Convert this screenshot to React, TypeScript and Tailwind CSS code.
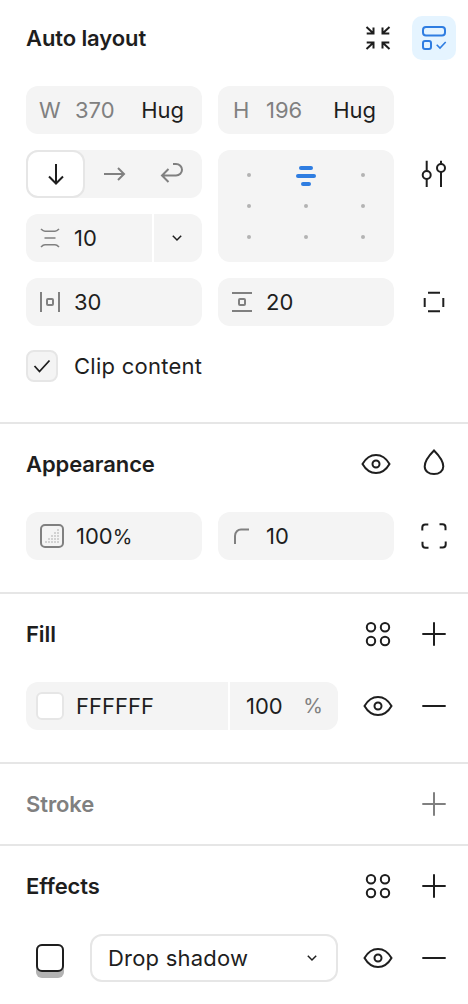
import React from "react";

const I = ({ children, className = "text-[#1e1e1e]" }: { children: React.ReactNode; className?: string }) => (
  <svg viewBox="0 0 48 48" width="48" height="48" fill="none" stroke="currentColor" strokeWidth="2" className={`shrink-0 ${className}`}>
    {children}
  </svg>
);

const Eye = ({ className }: { className?: string }) => (
  <I className={className}>
    <path d="M10.5 24C13.5 18.8 18.3 15 24 15s10.500 3.800 13.500 9C34.500 29.200 29.700 33 24 33s-10.500-3.800-13.500-9z" />
    <circle cx="24" cy="24" r="3.500" />
  </I>
);
const Plus = ({ className }: { className?: string }) => (
  <I className={className}>
    <path d="M12.300 24h23.400M24 12.300v23.400" />
  </I>
);
const Minus = () => (
  <I>
    <path d="M12.300 24h23.400" />
  </I>
);
const Styles = () => (
  <I>
    <circle cx="17" cy="17.300" r="4.200" />
    <circle cx="31" cy="17.300" r="4.200" />
    <circle cx="17" cy="31" r="4.200" />
    <circle cx="31" cy="31" r="4.200" />
  </I>
);
const Chevron = () => (
  <svg viewBox="0 0 12 8" width="12" height="8" fill="none" stroke="#1e1e1e" strokeWidth="1.500" className="shrink-0">
    <path d="M1.800 1.800 6 6l4.200-4.200" />
  </svg>
);

const Field = ({ children, className = "" }: { children: React.ReactNode; className?: string }) => (
  <div className={`flex h-12 items-center rounded-xl bg-[#f4f4f4] ${className}`}>{children}</div>
);

const Title = ({ children, muted }: { children: React.ReactNode; muted?: boolean }) => (
  <div className={`text-[22px] font-semibold tracking-[-0.1px] ${muted ? "text-[#808080]" : "text-[#1e1e1e]"}`}>{children}</div>
);

const Header = ({ title, muted, children }: { title: string; muted?: boolean; children: React.ReactNode }) => (
  <div className="flex h-12 items-center justify-between">
    <Title muted={muted}>{title}</Title>
    <div className="flex items-center gap-2">{children}</div>
  </div>
);

const Dot = () => (
  <div className="flex items-center justify-center">
    <div className="size-[4px] rounded-full bg-[#b3b3b3]" />
  </div>
);

const Size = ({ label, value, className }: { label: string; value: string; className: string }) => (
  <Field className="justify-between pr-[18px]">
    <div className={`flex items-center text-[#808080] ${className}`}>
      <span>{label}</span>
    </div>
    <span className="mr-auto text-[#808080]">{value}</span>
    <span>Hug</span>
  </Field>
);

export default function App() {
  return (
    <div className="h-[1004px] w-[468px] overflow-hidden bg-white font-['Inter',sans-serif] text-[22px] text-[#1e1e1e]">
      <section className="border-b-2 border-[#e6e6e6] pb-[40px] pl-[26px] pr-[10px] pt-[14px]">
        <div className="flex h-12 items-center justify-between">
          <Title>Auto layout</Title>
          <div className="flex items-center gap-2">
            <I>
              <path d="M12.500 13l7 6.500M12.700 19.500h6.800v-6M35.500 13l-7 6.500M35.300 19.500h-6.800v-6M12.500 35l7-6.500M12.700 28.500h6.800v6M35.500 35l-7-6.500M35.300 28.500h-6.800v6" />
            </I>
            <div className="flex size-12 items-center justify-center">
              <div className="flex size-11 items-center justify-center rounded-[10px] bg-[#e5f4ff]">
                <svg viewBox="0 0 44 44" width="44" height="44" fill="none" stroke="#2f7de1" strokeWidth="2">
                  <rect x="11" y="11" width="22" height="8.500" rx="3" />
                  <rect x="11" y="25" width="8" height="8" rx="2" />
                  <path d="M24.700 28.700 28 32l5.700-6" strokeWidth="1.600" />
                </svg>
              </div>
            </div>
          </div>
        </div>

        <div className="mt-6 grid grid-cols-[176px_176px_48px] grid-rows-[48px_48px_48px_48px] gap-x-4 gap-y-4">
          <Size label="W" value="370" className="w-[49px] pl-[13px]" />
          <Size label="H" value="196" className="w-[48px] pl-[15px]" />
          <div />

          <Field>
            <div className="flex h-12 w-[59px] items-center justify-center rounded-xl border-2 border-[#e6e6e6] bg-white">
              <svg viewBox="0 0 24 24" width="24" height="24" fill="none" stroke="#1e1e1e" strokeWidth="2">
                <path d="M12 2v19M5 14.500l7 7 7-7" />
              </svg>
            </div>
            <div className="flex flex-1 items-center justify-center pr-[2px]">
              <svg viewBox="0 0 24 24" width="24" height="24" fill="none" stroke="#808080" strokeWidth="2">
                <path d="M2 12h20M16 6l6 6-6 6" />
              </svg>
            </div>
            <div className="flex w-[58px] items-center justify-center pr-[2px]">
              <svg viewBox="0 0 24 24" width="24" height="24" fill="none" stroke="#808080" strokeWidth="2">
                <path d="M8.500 7 2 13.500 8.500 20M2 13.500h14c3.500 0 6-2.700 6-5.700S19.500 2 16 2h-3" />
              </svg>
            </div>
          </Field>
          <div className="row-span-2 grid grid-cols-3 grid-rows-3 rounded-xl bg-[#f4f4f4] px-[2px] py-[9px]">
            <Dot />
            <div className="flex flex-col items-center justify-center gap-[4px] pt-[2px]">
              <div className="h-[4px] w-[14px] rounded-full bg-[#2f7de1]" />
              <div className="h-[4px] w-[20px] rounded-full bg-[#2f7de1]" />
              <div className="h-[4px] w-[10px] rounded-full bg-[#2f7de1]" />
            </div>
            <Dot />
            <Dot />
            <Dot />
            <Dot />
            <Dot />
            <Dot />
            <Dot />
          </div>
          <I>
            <path d="M16.700 10.700v10M16.700 29v8M31 10.700v3M31 22v15" />
            <circle cx="16.700" cy="25" r="4" />
            <circle cx="31" cy="18" r="4" />
          </I>

          <div className="flex h-12 gap-[2px]">
            <Field className="w-[126px] rounded-r-none pl-[14px]">
              <svg viewBox="0 0 20 20" width="20" height="20" fill="none" stroke="#808080" className="shrink-0">
                <path d="M1 1c1.500 1.500 2.500 2.200 4 2.200h10c1.500 0 2.500-.7 4-2.200M4.500 10h11M1 19c1.500-1.500 2.500-2.200 4-2.200h10c1.500 0 2.500.7 4 2.200" strokeWidth="1.600" />
              </svg>
              <span className="ml-[14px]">10</span>
            </Field>
            <Field className="flex-1 justify-center rounded-l-none pr-[2px]">
              <Chevron />
            </Field>
          </div>
          <div />

          <Field className="pl-[14px]">
            <svg viewBox="0 0 20 20" width="20" height="20" fill="none" stroke="#808080" strokeWidth="2" className="shrink-0">
              <path d="M1 0v20M19 0v20" />
              <rect x="7" y="7" width="6" height="6" rx="1" />
            </svg>
            <span className="ml-[14px]">30</span>
          </Field>
          <Field className="pl-[14px]">
            <svg viewBox="0 0 20 20" width="20" height="20" fill="none" stroke="#808080" strokeWidth="2" className="shrink-0">
              <path d="M0 1h20M0 19h20" />
              <rect x="7" y="7" width="6" height="6" rx="1" />
            </svg>
            <span className="ml-[14px]">20</span>
          </Field>
          <I>
            <path d="M18 14.700h12M18 33.300h12M14.700 20v9M33.300 20v9" />
          </I>
        </div>

        <div className="mt-6 flex h-8 items-center gap-4">
          <div className="flex size-8 items-center justify-center rounded-lg border-2 border-[#e6e6e6] bg-[#f4f4f4]">
            <svg viewBox="0 0 18 14" width="18" height="14" fill="none" stroke="#1e1e1e" strokeWidth="1.800">
              <path d="M1.500 7 6.500 12.500 16.500 1.500" />
            </svg>
          </div>
          <span className="tracking-[0.25px]">Clip content</span>
        </div>
      </section>

      <section className="border-b-2 border-[#e6e6e6] pb-8 pl-[26px] pr-[10px] pt-4">
        <Header title="Appearance">
          <div className="mr-[2px]"><Eye /></div>
          <I>
            <path d="M24 10.500C21 13.500 14.700 20.500 14.700 26.500c0 4.500 4 7.500 9.300 7.500s9.300-3 9.300-7.500C33.300 20.500 27 13.500 24 10.500z" />
          </I>
        </Header>
        <div className="mt-6 grid grid-cols-[176px_176px_48px] gap-x-4">
          <Field className="pl-[14px]">
            <svg viewBox="0 0 24 24" width="24" height="24" fill="none" stroke="#808080" className="shrink-0">
              <rect x="1" y="1" width="22" height="22" rx="4" strokeWidth="2" />
              <g fill="#a6a6a6" stroke="none">
                <circle cx="18" cy="6" r="0.800" />
                <circle cx="15" cy="9" r="0.800" />
                <circle cx="18" cy="9" r="0.800" />
                <circle cx="12" cy="12" r="0.800" />
                <circle cx="15" cy="12" r="0.800" />
                <circle cx="18" cy="12" r="0.800" />
                <circle cx="9" cy="15" r="0.800" />
                <circle cx="12" cy="15" r="0.800" />
                <circle cx="15" cy="15" r="0.800" />
                <circle cx="18" cy="15" r="0.800" />
                <circle cx="6" cy="18" r="0.800" />
                <circle cx="9" cy="18" r="0.800" />
                <circle cx="12" cy="18" r="0.800" />
                <circle cx="15" cy="18" r="0.800" />
                <circle cx="18" cy="18" r="0.800" />
              </g>
            </svg>
            <span className="ml-[12px]">100<span className="text-[20px]">%</span></span>
          </Field>
          <Field className="pl-[16px]">
            <svg viewBox="0 0 16 16" width="16" height="16" fill="none" stroke="#808080" strokeWidth="2" className="shrink-0">
              <path d="M1 16V8c0-4 3-6.500 6-6.500h8" />
            </svg>
            <span className="ml-[16px]">10</span>
          </Field>
          <I>
            <path d="M12.300 18.500v-3a3 3 0 0 1 3-3h3M29.500 12.300h3a3 3 0 0 1 3 3v3M35.700 29.500v3a3 3 0 0 1-3 3h-3M18.500 35.700h-3a3 3 0 0 1-3-3v-3" />
          </I>
        </div>
      </section>

      <section className="border-b-2 border-[#e6e6e6] pb-8 pl-[26px] pr-[10px] pt-4">
        <Header title="Fill">
          <Styles />
          <Plus />
        </Header>
        <div className="mt-6 flex items-center">
          <div className="flex h-12 w-[312px] gap-[2px]">
            <Field className="w-[202px] rounded-r-none pl-[10px]">
              <div className="size-7 rounded-md border-2 border-[#e6e6e6] bg-white" />
              <span className="ml-3">FFFFFF</span>
            </Field>
            <Field className="flex-1 justify-between rounded-l-none pl-[16px] pr-[15px]">
              <span>100</span>
              <span className="text-[20px] text-[#808080]">%</span>
            </Field>
          </div>
          <div className="ml-4 flex items-center gap-2">
            <Eye />
            <Minus />
          </div>
        </div>
      </section>

      <section className="border-b-2 border-[#e6e6e6] pb-4 pl-[26px] pr-[10px] pt-4">
        <Header title="Stroke" muted>
          <Plus className="text-[#808080]" />
        </Header>
      </section>

      <section className="pl-[26px] pr-[10px] pt-4">
        <Header title="Effects">
          <Styles />
          <Plus />
        </Header>
        <div className="mt-6 flex items-center">
          <div className="ml-[10px] mt-[6px] flex h-[34px] w-7 items-start rounded-b-md rounded-t-md bg-[#b3b3b3]">
            <div className="size-7 rounded-md border-2 border-[#1e1e1e] bg-white" />
          </div>
          <div className="ml-[26px] flex h-12 w-[248px] items-center justify-between rounded-xl border-2 border-[#e6e6e6] bg-white pl-4 pr-[18px]">
            <span className="tracking-[0.2px]">Drop shadow</span>
            <Chevron />
          </div>
          <div className="ml-4 flex items-center gap-2">
            <Eye />
            <Minus />
          </div>
        </div>
      </section>
    </div>
  );
}
